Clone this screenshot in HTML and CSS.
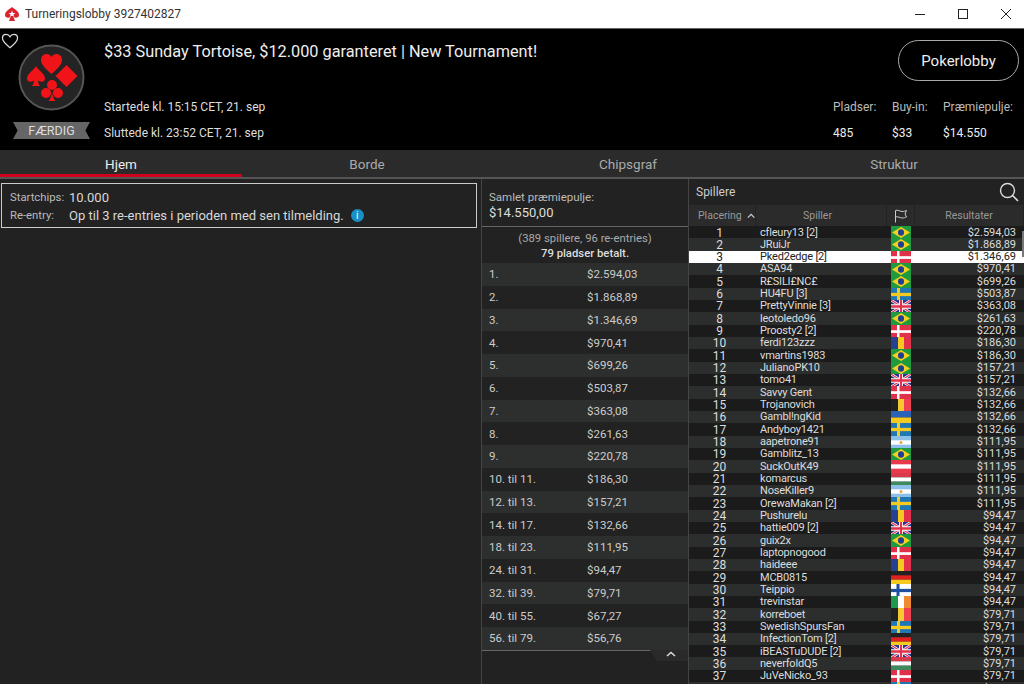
FILE: index.html
```html
<!DOCTYPE html>
<html lang="da">
<head>
  <meta charset="UTF-8" />
  <title>Turneringslobby 3927402827</title>
  <link rel="stylesheet" href="styles.css">
</head>
<body>
  <svg class="defs" width="0" height="0">
    <symbol id="br" viewBox="0 0 20 12" preserveAspectRatio="none"><rect width="20" height="12" fill="#1f9a3c"/><path d="M10 1 19 6 10 11 1 6z" fill="#f5d01e"/><circle cx="10" cy="6" r="3" fill="#1e3f8f"/></symbol>
    <symbol id="dk" viewBox="0 0 20 12" preserveAspectRatio="none"><rect width="20" height="12" fill="#e0304a"/><rect x="6" width="2.5" height="12" fill="#fff"/><rect y="4.8" width="20" height="2.5" fill="#fff"/></symbol>
    <symbol id="se" viewBox="0 0 20 12" preserveAspectRatio="none"><rect width="20" height="12" fill="#1f78b4"/><rect x="6" width="3" height="12" fill="#f5c91e"/><rect y="4.5" width="20" height="3" fill="#f5c91e"/></symbol>
    <symbol id="gb" viewBox="0 0 20 12" preserveAspectRatio="none"><rect width="20" height="12" fill="#27358f"/><path d="M0 0 20 12M20 0 0 12" stroke="#fff" stroke-width="2.400"/><path d="M0 0 20 12M20 0 0 12" stroke="#e0304a" stroke-width="1"/><path d="M10 0V12M0 6H20" stroke="#fff" stroke-width="4"/><path d="M10 0V12M0 6H20" stroke="#e0304a" stroke-width="2.200"/></symbol>
    <symbol id="ro" viewBox="0 0 20 12" preserveAspectRatio="none"><rect width="7" height="12" fill="#27408f"/><rect x="7" width="6" height="12" fill="#f5c91e"/><rect x="13" width="7" height="12" fill="#e0304a"/></symbol>
    <symbol id="be" viewBox="0 0 20 12" preserveAspectRatio="none"><rect width="7" height="12" fill="#222"/><rect x="7" width="6" height="12" fill="#f5c932"/><rect x="13" width="7" height="12" fill="#ee4050"/></symbol>
    <symbol id="ua" viewBox="0 0 20 12" preserveAspectRatio="none"><rect width="20" height="6" fill="#2a62b8"/><rect y="6" width="20" height="6" fill="#f5c91e"/></symbol>
    <symbol id="ar" viewBox="0 0 20 12" preserveAspectRatio="none"><rect width="20" height="12" fill="#8cc0e8"/><rect y="4" width="20" height="4" fill="#fff"/><circle cx="10" cy="6" r="1.400" fill="#f0a030"/></symbol>
    <symbol id="at" viewBox="0 0 20 12" preserveAspectRatio="none"><rect width="20" height="12" fill="#e83a4c"/><rect y="4" width="20" height="4" fill="#fff"/></symbol>
    <symbol id="hu" viewBox="0 0 20 12" preserveAspectRatio="none"><rect width="20" height="4" fill="#d83a4c"/><rect y="4" width="20" height="4" fill="#fff"/><rect y="8" width="20" height="4" fill="#3f8a5c"/></symbol>
    <symbol id="de" viewBox="0 0 20 12" preserveAspectRatio="none"><rect width="20" height="4" fill="#222"/><rect y="4" width="20" height="4" fill="#e02020"/><rect y="8" width="20" height="4" fill="#f5c91e"/></symbol>
    <symbol id="fi" viewBox="0 0 20 12" preserveAspectRatio="none"><rect width="20" height="12" fill="#fff"/><rect x="5.500" width="3" height="12" fill="#1f4f9f"/><rect y="4.500" width="20" height="3" fill="#1f4f9f"/></symbol>
    <symbol id="ie" viewBox="0 0 20 12" preserveAspectRatio="none"><rect width="7" height="12" fill="#1f9a4c"/><rect x="7" width="6" height="12" fill="#fff"/><rect x="13" width="7" height="12" fill="#f08a30"/></symbol>
  </svg>

  <div class="titlebar">
    <svg class="app-icon" width="16" height="16" viewBox="0 0 16 16"><path d="M8 1 C10 3 15 5 15 9 C15 11.500 12 12.500 9.500 11 L11 15 H5 L6.500 11 C4 12.500 1 11.500 1 9 C1 5 6 3 8 1z" fill="#d9232e"/><path d="M8 4.500 8.900 7 11.500 7 9.400 8.500 10.200 11 8 9.500 5.800 11 6.600 8.500 4.500 7 7.100 7z" fill="#fff"/></svg>
    <span class="title-text">Turneringslobby 3927402827</span>
    <div class="win-buttons">
      <svg width="10" height="10" viewBox="0 0 10 10"><path d="M0 5.500H10" stroke="#222" fill="none"/></svg>
      <svg width="10" height="10" viewBox="0 0 10 10"><rect x=".5" y=".5" width="9" height="9" stroke="#222" fill="none"/></svg>
      <svg width="10" height="10" viewBox="0 0 10 10"><path d="M0 0 10 10M10 0 0 10" stroke="#222" fill="none"/></svg>
    </div>
  </div>

  <header class="lobby-head">
    <svg class="heart" width="18" height="16" viewBox="0 0 20 18"><path d="M10 16.500C4 11.500 1.500 9 1.500 5.800 1.500 3.300 3.400 1.500 5.700 1.500 7.500 1.500 9.100 2.500 10 4.200 10.900 2.500 12.500 1.500 14.300 1.500 16.600 1.500 18.500 3.300 18.500 5.800 18.500 9 16 11.500 10 16.500z" fill="none" stroke="#ddd" stroke-width="1.400"/></svg>
    <div class="badge-col">
      <svg class="suit-logo" width="68" height="68" viewBox="0 0 68 68">
        <circle cx="33.500" cy="33.500" r="32" fill="#242424" stroke="#555" stroke-width="2"/>
        <path d="M33.500 30C27 24.500 23 20.500 23 15.800 23 12.400 25.500 10 28.500 10 30.700 10 32.500 11.200 33.500 13 34.500 11.200 36.300 10 38.500 10 41.500 10 44 12.400 44 15.800 44 20.500 40 24.500 33.500 30z" fill="#f01418"/>
        <path d="M48.500 21 59.500 32 48.500 43 37.500 32z" fill="#f01418"/>
        <path d="M18 22C20 26 27 29.500 27 34.500 27 37.800 23.500 38.800 20 36.500 20 38.500 20.800 40.500 22 42H14C15.200 40.500 16 38.500 16 36.500 12.500 38.800 9 37.800 9 34.500 9 29.500 16 26 18 22z" fill="#f01418"/>
        <circle cx="34" cy="41" r="5" fill="#f01418"/><circle cx="28" cy="49" r="5" fill="#f01418"/><circle cx="40" cy="49" r="5" fill="#f01418"/>
        <path d="M34 45C34 50 35 54.500 37.500 57H30.500C33 54.500 34 50 34 45z" fill="#f01418"/>
      </svg>
      <div class="ribbon">FÆRDIG</div>
    </div>
    <div class="info-col">
      <h1 class="tour-name">$33 Sunday Tortoise, $12.000 garanteret | New Tournament!</h1>
      <div class="tour-times">
        <div>Startede kl. 15:15 CET, 21. sep</div>
        <div>Sluttede kl. 23:52 CET, 21. sep</div>
      </div>
    </div>
    <div class="right-col">
      <button class="lobby-btn">Pokerlobby</button>
      <div class="stats">
        <div class="stat s1"><span>Pladser:</span><b>485</b></div>
        <div class="stat s2"><span>Buy-in:</span><b>$33</b></div>
        <div class="stat s3"><span>Præmiepulje:</span><b>$14.550</b></div>
      </div>
    </div>
  </header>

  <nav class="tabs">
    <a class="tab tab-home active">Hjem</a>
    <a class="tab tab-tables">Borde</a>
    <a class="tab tab-chips">Chipsgraf</a>
    <a class="tab tab-struct">Struktur</a>
  </nav>

  <main class="content">
    <section class="home-pane">
      <div class="chips-box">
        <div class="chips-row"><span class="chips-label">Startchips:</span><span>10.000</span></div>
        <div class="chips-row"><span class="chips-label">Re-entry:</span><span>Op til 3 re-entries i perioden med sen tilmelding.</span><i class="info-dot">i</i></div>
      </div>
    </section>

    <section class="prize-pane">
      <div class="pool">
        <div class="pool-label">Samlet præmiepulje:</div>
        <div class="pool-value">$14.550,00</div>
      </div>
      <div class="paid">
        <div>(389 spillere, 96 re-entries)</div>
        <div class="paid-bold">79 pladser betalt.</div>
      </div>
      <div class="prize-list">
        <div class="prize"><span>1.</span><span>$2.594,03</span></div>
        <div class="prize"><span>2.</span><span>$1.868,89</span></div>
        <div class="prize"><span>3.</span><span>$1.346,69</span></div>
        <div class="prize"><span>4.</span><span>$970,41</span></div>
        <div class="prize"><span>5.</span><span>$699,26</span></div>
        <div class="prize"><span>6.</span><span>$503,87</span></div>
        <div class="prize"><span>7.</span><span>$363,08</span></div>
        <div class="prize"><span>8.</span><span>$261,63</span></div>
        <div class="prize"><span>9.</span><span>$220,78</span></div>
        <div class="prize"><span>10. til 11.</span><span>$186,30</span></div>
        <div class="prize"><span>12. til 13.</span><span>$157,21</span></div>
        <div class="prize"><span>14. til 17.</span><span>$132,66</span></div>
        <div class="prize"><span>18. til 23.</span><span>$111,95</span></div>
        <div class="prize"><span>24. til 31.</span><span>$94,47</span></div>
        <div class="prize"><span>32. til 39.</span><span>$79,71</span></div>
        <div class="prize"><span>40. til 55.</span><span>$67,27</span></div>
        <div class="prize"><span>56. til 79.</span><span>$56,76</span></div>
      </div>
      <div class="collapse"><svg width="10" height="6" viewBox="0 0 10 6"><path d="M1 5 5 1.500 9 5" fill="none" stroke="#ddd" stroke-width="1.500"/></svg></div>
    </section>

    <section class="players-pane">
      <div class="players-head">
        <span>Spillere</span>
        <svg width="20" height="20" viewBox="0 0 20 20"><circle cx="8.500" cy="8.500" r="7" fill="none" stroke="#ddd" stroke-width="1.400"/><path d="M13.500 13.500 19 19" stroke="#ddd" stroke-width="1.600"/></svg>
      </div>
      <div class="col-heads">
        <div class="col-head col-rank">Placering <svg width="10" height="6" viewBox="0 0 10 6"><path d="M1 5 5 1 9 5" fill="none" stroke="#ccc" stroke-width="1.500"/></svg></div>
        <div class="col-head col-name">Spiller</div>
        <div class="col-head"><svg width="14" height="14" viewBox="0 0 14 14"><path d="M1.500 13.500V1.500C4 .5 6 2.500 8 2.500 10 2.500 11 2 12.500 1.500L11 5 12.500 8C11 8.500 10 9 8 9 6 9 4 7 1.500 8" fill="none" stroke="#ccc"/></svg></div>
        <div class="col-head">Resultater</div>
      </div>
      <div class="rows">
        <div class="row"><span>1</span><span>cfleury13 [2]</span><svg class="flag"><use href="#br"/></svg><span>$2.594,03</span></div>
        <div class="row"><span>2</span><span>JRuiJr</span><svg class="flag"><use href="#br"/></svg><span>$1.868,89</span></div>
        <div class="row me"><span>3</span><span>Pked2edge [2]</span><svg class="flag"><use href="#dk"/></svg><span>$1.346,69</span></div>
        <div class="row"><span>4</span><span>ASA94</span><svg class="flag"><use href="#br"/></svg><span>$970,41</span></div>
        <div class="row"><span>5</span><span>R£SILI£NC£</span><svg class="flag"><use href="#br"/></svg><span>$699,26</span></div>
        <div class="row"><span>6</span><span>HU4FU [3]</span><svg class="flag"><use href="#se"/></svg><span>$503,87</span></div>
        <div class="row"><span>7</span><span>PrettyVinnie [3]</span><svg class="flag"><use href="#gb"/></svg><span>$363,08</span></div>
        <div class="row"><span>8</span><span>leotoledo96</span><svg class="flag"><use href="#br"/></svg><span>$261,63</span></div>
        <div class="row"><span>9</span><span>Proosty2 [2]</span><svg class="flag"><use href="#dk"/></svg><span>$220,78</span></div>
        <div class="row"><span>10</span><span>ferdi123zzz</span><svg class="flag"><use href="#ro"/></svg><span>$186,30</span></div>
        <div class="row"><span>11</span><span>vmartins1983</span><svg class="flag"><use href="#br"/></svg><span>$186,30</span></div>
        <div class="row"><span>12</span><span>JulianoPK10</span><svg class="flag"><use href="#br"/></svg><span>$157,21</span></div>
        <div class="row"><span>13</span><span>tomo41</span><svg class="flag"><use href="#gb"/></svg><span>$157,21</span></div>
        <div class="row"><span>14</span><span>Savvy Gent</span><svg class="flag"><use href="#dk"/></svg><span>$132,66</span></div>
        <div class="row"><span>15</span><span>Trojanovich</span><svg class="flag"><use href="#be"/></svg><span>$132,66</span></div>
        <div class="row"><span>16</span><span>Gambl!ngKid</span><svg class="flag"><use href="#ua"/></svg><span>$132,66</span></div>
        <div class="row"><span>17</span><span>Andyboy1421</span><svg class="flag"><use href="#se"/></svg><span>$132,66</span></div>
        <div class="row"><span>18</span><span>aapetrone91</span><svg class="flag"><use href="#ar"/></svg><span>$111,95</span></div>
        <div class="row"><span>19</span><span>Gamblitz_13</span><svg class="flag"><use href="#br"/></svg><span>$111,95</span></div>
        <div class="row"><span>20</span><span>SuckOutK49</span><svg class="flag"><use href="#at"/></svg><span>$111,95</span></div>
        <div class="row"><span>21</span><span>komarcus</span><svg class="flag"><use href="#hu"/></svg><span>$111,95</span></div>
        <div class="row"><span>22</span><span>NoseKiller9</span><svg class="flag"><use href="#ar"/></svg><span>$111,95</span></div>
        <div class="row"><span>23</span><span>OrewaMakan [2]</span><svg class="flag"><use href="#se"/></svg><span>$111,95</span></div>
        <div class="row"><span>24</span><span>Pushurelu</span><svg class="flag"><use href="#ro"/></svg><span>$94,47</span></div>
        <div class="row"><span>25</span><span>hattie009 [2]</span><svg class="flag"><use href="#gb"/></svg><span>$94,47</span></div>
        <div class="row"><span>26</span><span>guix2x</span><svg class="flag"><use href="#br"/></svg><span>$94,47</span></div>
        <div class="row"><span>27</span><span>laptopnogood</span><svg class="flag"><use href="#dk"/></svg><span>$94,47</span></div>
        <div class="row"><span>28</span><span>haideee</span><svg class="flag"><use href="#ro"/></svg><span>$94,47</span></div>
        <div class="row"><span>29</span><span>MCB0815</span><svg class="flag"><use href="#de"/></svg><span>$94,47</span></div>
        <div class="row"><span>30</span><span>Teippio</span><svg class="flag"><use href="#fi"/></svg><span>$94,47</span></div>
        <div class="row"><span>31</span><span>trevinstar</span><svg class="flag"><use href="#ie"/></svg><span>$94,47</span></div>
        <div class="row"><span>32</span><span>korreboet</span><svg class="flag"><use href="#be"/></svg><span>$79,71</span></div>
        <div class="row"><span>33</span><span>SwedishSpursFan</span><svg class="flag"><use href="#se"/></svg><span>$79,71</span></div>
        <div class="row"><span>34</span><span>InfectionTom [2]</span><svg class="flag"><use href="#de"/></svg><span>$79,71</span></div>
        <div class="row"><span>35</span><span>iBEASTuDUDE [2]</span><svg class="flag"><use href="#gb"/></svg><span>$79,71</span></div>
        <div class="row"><span>36</span><span>neverfoldQ5</span><svg class="flag"><use href="#hu"/></svg><span>$79,71</span></div>
        <div class="row"><span>37</span><span>JuVeNicko_93</span><svg class="flag"><use href="#dk"/></svg><span>$79,71</span></div>
        <div class="row"><span>38</span><span>dMoon95</span><svg class="flag"><use href="#se"/></svg><span>$79,71</span></div>
      </div>
      <div class="scroll-thumb"></div>
    </section>
  </main>
</body>
</html>
```

FILE: styles.css
```css
* {
  box-sizing: border-box;
}

html, body {
  height: 100%;
}

body {
  margin: 0;
  height: 684px;
  overflow: hidden;
  display: flex;
  flex-direction: column;
  font-family: Roboto, sans-serif;
  font-size: 12px;
  color: #d8d8d8;
  background-color: #222;
}

.defs {
  position: absolute;
}

/* window title bar */
.titlebar {
  display: flex;
  align-items: center;
  height: 29px;
  flex: none;
  padding: 0 0 0 4px;
  background-color: #fff;
  border-bottom: 1px solid #666;
}

.app-icon {
  margin-right: 5px;
}

.title-text {
  font-size: 12px;
  color: #333;
}

.win-buttons {
  display: flex;
  gap: 33px;
  margin-left: auto;
  padding-right: 13px;
}

/* header */
.lobby-head {
  position: relative;
  display: flex;
  flex: none;
  height: 121px;
  background-color: #000;
}

.heart {
  position: absolute;
  left: 1px;
  top: 4px;
}

.badge-col {
  width: 104px;
  flex: none;
  padding: 15px 0 0 18px;
}

.suit-logo {
  display: block;
}

.ribbon {
  width: 77px;
  height: 17px;
  margin: 10px 0 0 -5px;
  background-color: #666;
  clip-path: polygon(0 0, 100% 0, 94% 50%, 100% 100%, 0 100%, 6% 50%);
  color: #ddd;
  font-size: 12.5px;
  line-height: 18px;
  text-align: center;
}

.info-col {
  flex: 1;
  display: flex;
  flex-direction: column;
  justify-content: space-between;
  padding: 13px 0 10px;
}

.tour-name {
  margin: 0;
  font-size: 16.3px;
  font-weight: 400;
  line-height: 20px;
  color: #eee;
  white-space: nowrap;
}

.tour-times {
  display: flex;
  flex-direction: column;
  gap: 12px;
  line-height: 14px;
  color: #ddd;
}

.right-col {
  flex: none;
  width: 191px;
  padding: 11px 5px 10px 0;
  display: flex;
  flex-direction: column;
  justify-content: space-between;
  align-items: flex-end;
}

.lobby-btn {
  width: 121px;
  height: 41px;
  border: 1px solid #aaa;
  border-radius: 21px;
  background: none;
  color: #eee;
  font-family: Roboto, sans-serif;
  font-size: 15px;
}

.stats {
  width: 186px;
  display: flex;
}

.stat {
  display: flex;
  flex-direction: column;
  gap: 12px;
  line-height: 14px;
  color: #bbb;
}

.stat b {
  font-weight: 400;
  color: #eee;
}

.s1 {
  width: 59px;
}

.s2 {
  width: 51px;
}

/* tabs */
.tabs {
  display: flex;
  flex: none;
  height: 29px;
  background-color: #2b2b2b;
  border-bottom: 2px solid #555;
}

.tab {
  height: 27px;
  line-height: 29px;
  text-align: center;
  font-size: 13.5px;
  color: #aaa;
}

.tab-home {
  width: 242px;
}

.tab-tables {
  width: 250px;
}

.tab-chips {
  width: 272px;
}

.tab-struct {
  width: 260px;
}

.tab.active {
  color: #eee;
  height: 27px;
  border-bottom: 3px solid #d0021b;
}

/* main columns */
.content {
  flex: 1;
  display: flex;
  min-height: 0;
}

.home-pane {
  width: 481px;
  flex: none;
  padding: 4px 4px 0 1px;
}

.chips-box {
  height: 45px;
  padding: 4px 8px;
  border: 1px solid #ccc;
  font-size: 13px;
}

.chips-row {
  display: flex;
  align-items: center;
  height: 18px;
}

.chips-label {
  width: 59px;
  font-size: 11.3px;
  color: #bbb;
}

.info-dot {
  width: 13px;
  height: 13px;
  margin-left: 7px;
  border-radius: 50%;
  background-color: #1a8fc4;
  color: #fff;
  font-size: 10px;
  font-style: normal;
  line-height: 13px;
  text-align: center;
}

.prize-pane {
  position: relative;
  width: 208px;
  flex: none;
  border-left: 1px solid #444;
  border-right: 1px solid #444;
}

.pool {
  height: 48px;
  padding: 10px 7px 0;
  border-bottom: 1px solid #666;
  line-height: 16px;
}

.pool-label {
  font-size: 11.5px;
  color: #bbb;
}

.pool-value {
  font-size: 13px;
  color: #ddd;
}

.paid {
  height: 36px;
  padding-top: 4px;
  text-align: center;
  font-size: 11.3px;
  line-height: 15px;
  color: #aaa;
}

.paid-bold {
  font-weight: 500;
  color: #ddd;
}

.prize-list {
  border-bottom: 1px solid #666;
}

.prize {
  display: flex;
  height: 22.75px;
  align-items: center;
  padding-left: 7px;
  font-size: 11.5px;
  color: #ccc;
}

.prize:nth-child(odd) {
  background-color: #2d2f2f;
}

.prize span:first-child {
  width: 98px;
}

.collapse {
  position: absolute;
  right: 0;
  top: 471px;
  width: 38px;
  height: 11px;
  background-color: #2a2a2a;
  clip-path: polygon(0 0, 100% 0, 100% 100%, 18% 100%);
  text-align: right;
  padding-right: 12px;
  line-height: 7px;
}

.players-pane {
  position: relative;
  flex: 1;
  min-width: 0;
  overflow: hidden;
}

.players-head {
  display: flex;
  justify-content: space-between;
  align-items: center;
  height: 26px;
  padding: 0 5px 0 7px;
  background-color: #222;
  color: #ccc;
  font-size: 12px;
}

.col-heads {
  display: grid;
  grid-template-columns: 67px 131px 28px 1fr;
  height: 21px;
  background-color: #2b2b2b;
}

.col-head {
  display: flex;
  align-items: center;
  justify-content: center;
  gap: 4px;
  border-right: 1px solid #222;
  color: #999;
  font-size: 10.5px;
}

.col-rank {
  padding-left: 9px;
  gap: 5px;
}

.col-name {
  padding-right: 7px;
}

.rows {
  display: flex;
  flex-direction: column;
}

.row {
  display: grid;
  grid-template-columns: 66px 136px 20px 1fr;
  align-items: center;
  height: 12.33px;
  flex: none;
  font-size: 11px;
  line-height: 12px;
  color: #ddd;
}

.row:nth-child(odd) {
  background-color: #1b1b1b;
}

.row:nth-child(even) {
  background-color: #2c2e2e;
}

.row span:first-child {
  text-align: center;
  padding-right: 5px;
  font-size: 12px;
}

.row span:nth-child(2) {
  padding-left: 5px;
  letter-spacing: -0.2px;
  white-space: nowrap;
}

.row span:last-child {
  text-align: right;
  padding-right: 8px;
}

.row.me {
  background-color: #fff;
  color: #222;
}

.flag {
  display: block;
  width: 20px;
  height: 13px;
}

.scroll-thumb {
  position: absolute;
  right: 0;
  top: 52px;
  width: 2px;
  height: 26px;
  background-color: #777;
}
```
